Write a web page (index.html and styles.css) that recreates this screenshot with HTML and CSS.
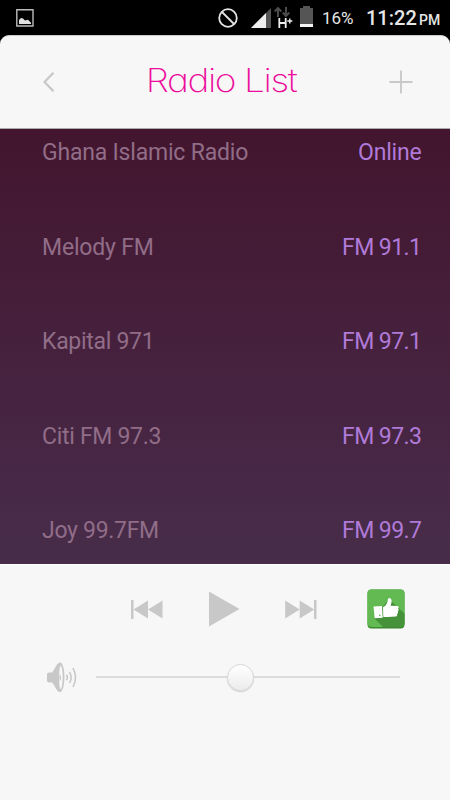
FILE: index.html
```html
<!DOCTYPE html>
<html lang="en">
<head>
<meta charset="utf-8">
<title>Radio List</title>
<link rel="stylesheet" href="styles.css">
</head>
<body>
<div class="status">
  <svg class="picture" width="18" height="18" viewBox="0 0 18 18"><path d="M.8.8h16.2v16.2H.8z" fill="none" stroke="#bbb" stroke-width="1.4"/><path d="M3 15v-4l2-2 2 .5 2 2 3-.8 3 3V15z" fill="#e2e2e2"/></svg>
  <svg class="block" width="20" height="20" viewBox="0 0 20 20" fill="none" stroke="#e4e4e4" stroke-width="1.8"><circle cx="10" cy="10" r="8.8"/><path d="M4 4l12 12"/></svg>
  <svg class="signal" width="20" height="20" viewBox="0 0 20 20"><path d="M0 20L20 0v20z" fill="#555"/><path d="M0 20L15 5v15z" fill="#eee"/></svg>
  <div class="network">
    <svg width="16" height="10" viewBox="0 0 16 10" fill="none" stroke="#4c4c4c" stroke-width="2"><path d="M4 10V1M.7 4.5L4 1l3.3 3.5M12 0v9M8.7 5.5L12 9l3.3-3.5"/></svg>
    <svg width="15" height="10" viewBox="0 0 15 10" fill="none" stroke="#eee" stroke-width="1.8"><path d="M1.3 0v10M7.7 0v10M1.3 5h6.4"/><path d="M9.3 3h5M11.8.5v5" stroke-width="1.4"/></svg>
  </div>
  <svg class="battery" width="13" height="21" viewBox="0 0 13 21"><path d="M0 2h3V0h7v2h3v19H0z" fill="#555"/><path d="M0 18h13v3H0z" fill="#f4f4f4"/></svg>
  <span class="percent">16%</span>
  <span class="clock">11:22</span><span class="meridiem">PM</span>
</div>
<header class="header">
  <svg class="back" width="12" height="20" viewBox="0 0 12 20" fill="none" stroke="#c8c8c8" stroke-width="2.3"><path d="M10.5.8L1.5 10l9 9.3"/></svg>
  <h1 class="title">Radio List</h1>
  <svg class="add" width="24" height="24" viewBox="0 0 24 24" stroke="#c9c9c9" stroke-width="1.9"><path d="M.5 12h23M12 .5v23"/></svg>
</header>
<main class="list">
  <div class="row"><span class="name">Ghana Islamic Radio</span><span class="freq online">Online</span></div>
  <div class="row"><span class="name">Melody FM</span><span class="freq">FM 91.1</span></div>
  <div class="row"><span class="name numbered">Kapital 971</span><span class="freq">FM 97.1</span></div>
  <div class="row"><span class="name numbered">Citi FM 97.3</span><span class="freq">FM 97.3</span></div>
  <div class="row"><span class="name numbered">Joy 99.7FM</span><span class="freq">FM 99.7</span></div>
</main>
<footer class="player">
  <div class="controls">
    <svg class="prev" width="32" height="19" viewBox="0 0 32 19" fill="#c8c8c8"><path d="M0 0h2.5v19H0zM17 .5v18L2.5 9.5zM31.5.5v18L17 9.5z"/></svg>
    <svg class="play" width="31" height="36" viewBox="0 0 31 36" fill="#c8c8c8"><path d="M0 .5L30.5 18 0 35.5z"/></svg>
    <svg class="next" width="32" height="19" viewBox="0 0 32 19" fill="#c8c8c8"><path d="M29 0h2.5v19H29zM.2.5v18l14.5-9zM14.7.5v18l14.5-9z"/></svg>
    <svg class="like" width="38" height="40" viewBox="0 0 38 40"><rect x=".5" y=".5" width="37" height="39" rx="4" fill="#398a2d"/><rect x=".5" y=".5" width="37" height="37.5" rx="4" fill="#63ba53"/><path d="M7 29L22 10l15.5 14.5V34a4 4 0 0 1-4 4H16z" fill="#45923a"/><path d="M6.5 17.5l8.5-.5.7 11.8-8 .5z" fill="#fff"/><path d="M16 18.2c3-1.5 4.6-4 5-8.2.6-1.8 3.4-1 3.6 1.5.1 2-.5 3.8-1 5.2l6.8.2c1.6.2 1.5 2.1.6 2.7 1 .8.8 2.3-.2 2.8.6 1 .2 2.1-.7 2.5.4 1.2-.2 2.4-1.4 2.7-3.8.5-8 .7-12.4.3z" fill="#fff"/><circle cx="12.8" cy="26.4" r=".8" fill="#63ba53"/></svg>
  </div>
  <div class="volume">
    <svg class="speaker" width="30" height="31" viewBox="0 0 30 31"><path d="M0 12.5Q0 10.5 2 10.5h3C8 7.5 9.5 1 13 .6c6 0 6 29.6 0 29.6-3.5-.4-5-7-8-9.7H2Q0 20.5 0 18.5z" fill="#c8c8c8"/><path d="M13.7 3.5c-2.2 2.2-2.2 21.8 0 24 2.6-3 2.6-21 0-24z" fill="#f7f7f7"/><path d="M12.5 12c2 1 2 6 0 7z" fill="#c8c8c8"/><path d="M19.5 12.7q1.8 2.8 0 5.6M22.5 10q3.3 5.4 0 11M26 6q5 9.5 0 19" fill="none" stroke="#c8c8c8" stroke-width="1.6"/></svg>
    <div class="track"><div class="thumb"></div></div>
  </div>
</footer>
</body>
</html>
```
FILE: styles.css
```css
* { box-sizing: border-box; }
body { margin: 0; width: 450px; height: 800px; overflow: hidden; background: #000; font-family: Roboto, sans-serif; display: flex; flex-direction: column; }
svg { display: block; flex: none; }
.status { height: 35px; flex: none; display: flex; align-items: flex-start; color: #e6e6e6; white-space: nowrap; }
.picture { margin: 9px 0 0 16px; }
.block { margin: 8px 0 0 184px; }
.signal { margin: 8px 0 0 13px; }
.network { width: 16px; margin: 7px 0 0 3px; }
.network svg + svg { margin: 1px 0 0 4px; }
.battery { margin: 6px 0 0 10px; }
.percent { width: 32px; margin: 7px 0 0 9px; font-size: 17px; line-height: 22px; }
.clock { width: 51px; margin: 6px 0 0 12px; font-size: 20px; font-weight: 500; line-height: 25px; }
.meridiem { margin: 11px 0 0 2px; font-size: 14px; font-weight: 500; line-height: 19px; }
.header { height: 94px; flex: none; display: flex; align-items: center; background: #f7f7f7; border-top: 1px solid #ccc; border-bottom: 1px solid #aaa; border-radius: 9px 9px 0 0; }
.back { margin-left: 43px; }
.title { width: 156px; margin: 0 0 2px 91px; color: #ec0c9c; font: 200 32px/40px Inter, sans-serif; font-feature-settings: "cv11"; letter-spacing: -1.2px; white-space: nowrap; transform: scaleX(1.155); transform-origin: 2px 50%; }
.add { margin-left: 87px; }
.list { height: 435px; flex: none; overflow: hidden; padding: 0 28px 0 42px; background: linear-gradient(#43152e, #472846 80%, #472d49); }
.row { height: 94.6px; display: flex; justify-content: space-between; font-size: 23px; line-height: 48.6px; color: #916d88; white-space: nowrap; }
.name { letter-spacing: -.2px; }
.numbered { letter-spacing: -.3px; }
.freq { color: #b07ad8; letter-spacing: -.55px; margin-right: .5px; }
.online { letter-spacing: -.2px; }
.player { flex: 1; background: #f7f7f7; border-top: 1px solid #fff; }
.controls { height: 88px; display: flex; align-items: center; }
.prev { margin-left: 131px; }
.play { margin-left: 46px; }
.next { margin-left: 45px; }
.like { margin-left: 50px; }
.volume { display: flex; align-items: center; height: 48px; }
.speaker { margin-left: 47px; }
.track { position: relative; width: 304px; height: 2px; margin-left: 19px; background: #dcdcdc; }
.thumb { position: absolute; left: 131px; top: -12px; width: 27px; height: 27px; border-radius: 50%; border: 1px solid #d8d8d8; background: linear-gradient(#fff, #ececec); box-shadow: 0 1px 1px #ccc; }
```
